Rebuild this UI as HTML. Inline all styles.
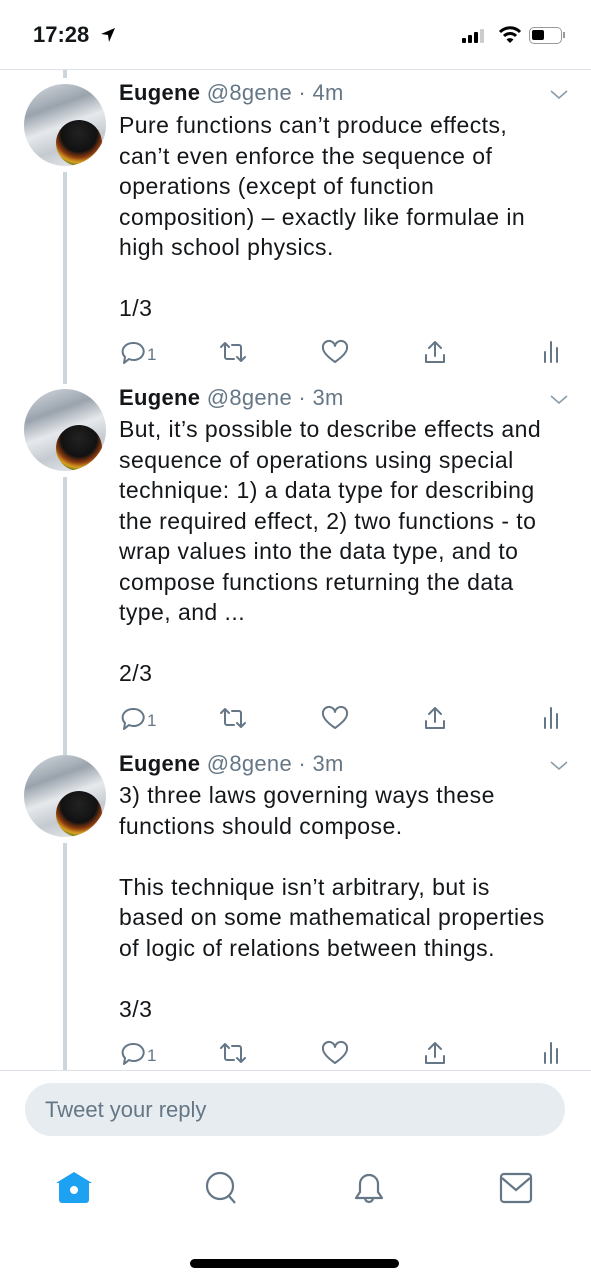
<!DOCTYPE html>
<html><head><meta charset="utf-8"><style>
*{margin:0;padding:0;box-sizing:border-box}
body{width:591px;height:1280px;background:#fff;position:relative;overflow:hidden;font-family:"Liberation Sans",Helvetica,Arial,sans-serif;color:#14171a}
.abs{position:absolute}
.line{position:absolute;left:63px;width:4px;background:#ccd6dd}
.av{position:absolute;left:24px;width:82px;height:82px;border-radius:50%;overflow:hidden;background:linear-gradient(160deg,#d8dde2 0%,#9aa3ad 30%,#e6e9ec 50%,#c4cad0 70%,#f0f2f4 100%)}
.av .h{position:absolute;left:32px;top:36px;width:46px;height:46px;border-radius:50%;background:radial-gradient(circle at 50% 30%,#222 0%,#111 45%,#8a3a10 60%,#d9a020 72%,#3b6e20 85%,#111 100%)}
.name{position:absolute;left:119px;font-size:22px;line-height:26px;white-space:nowrap;letter-spacing:0.3px}
.name b{font-weight:bold;color:#14171a}
.name span{color:#657786}
.chev{position:absolute;left:549px;width:20px;height:12px}
.txt{position:absolute;left:119px;font-size:23px;line-height:30.5px;letter-spacing:0.45px;width:470px;white-space:nowrap}
</style></head><body>
<div class="abs" style="left:33px;top:22px;font-size:22px;font-weight:bold">17:28</div>
<svg class="abs" style="left:100px;top:27px" width="16" height="16" viewBox="0 0 16 16"><path d="M15 1 L1 7 L8 8 L9 15 Z" fill="#000"/></svg>
<svg class="abs" style="left:462px;top:28px" width="30" height="16"><rect x="0" y="10" width="4" height="5" rx="1"/><rect x="6" y="7" width="4" height="8" rx="1"/><rect x="12" y="4" width="4" height="11" rx="1"/><rect x="18" y="1" width="4" height="14" rx="1" fill="#ccc"/></svg>
<svg class="abs" style="left:498px;top:26px" width="24" height="18" viewBox="0 0 24 18"><path d="M2 6 A14 14 0 0 1 22 6" stroke="#000" stroke-width="3" fill="none"/><path d="M6 10 A8.5 8.5 0 0 1 18 10" stroke="#000" stroke-width="3" fill="none"/><path d="M12 17 L8.5 13.5 A5 5 0 0 1 15.5 13.5 Z"/></svg>
<div class="abs" style="left:529px;top:27px;width:33px;height:17px;border:1.5px solid #999;border-radius:5px"><div style="position:absolute;left:2px;top:2px;width:12px;height:10px;background:#000;border-radius:2px"></div></div>
<div class="abs" style="left:563px;top:32px;width:2px;height:6px;background:#999"></div>
<div class="abs" style="left:0;top:69px;width:591px;height:1px;background:#dde3e8"></div>

<div class="line" style="top:70px;height:8px"></div>
<div class="line" style="top:172px;height:212px"></div>
<div class="line" style="top:477px;height:278px"></div>
<div class="line" style="top:843px;height:228px"></div>

<div class="av" style="top:84px"><div class="h"></div></div>
<div class="name" style="top:80px"><b>Eugene</b> <span>@8gene · 4m</span></div>
<svg class="chev" style="top:89px" viewBox="0 0 20 12"><path d="M2 2 L10 9 L18 2" stroke="#8899a6" stroke-width="1.5" fill="none"/></svg>
<div class="txt" style="top:110px">Pure functions can’t produce effects,<br>can’t even enforce the sequence of<br>operations (except of function<br>composition) – exactly like formulae in<br>high school physics.<br><br>1/3</div>

<div class="av" style="top:389px"><div class="h"></div></div>
<div class="name" style="top:385px"><b>Eugene</b> <span>@8gene · 3m</span></div>
<svg class="chev" style="top:394px" viewBox="0 0 20 12"><path d="M2 2 L10 9 L18 2" stroke="#8899a6" stroke-width="1.5" fill="none"/></svg>
<div class="txt" style="top:414px">But, it’s possible to describe effects and<br>sequence of operations using special<br>technique: 1) a data type for describing<br>the required effect, 2) two functions - to<br>wrap values into the data type, and to<br>compose functions returning the data<br>type, and ...<br><br>2/3</div>

<div class="av" style="top:755px"><div class="h"></div></div>
<div class="name" style="top:751px"><b>Eugene</b> <span>@8gene · 3m</span></div>
<svg class="chev" style="top:760px" viewBox="0 0 20 12"><path d="M2 2 L10 9 L18 2" stroke="#8899a6" stroke-width="1.5" fill="none"/></svg>
<div class="txt" style="top:780px">3) three laws governing ways these<br>functions should compose.<br><br>This technique isn’t arbitrary, but is<br>based on some mathematical properties<br>of logic of relations between things.<br><br>3/3</div>

<svg class="abs" style="left:0;top:338px" width="591" height="30"><g id="acts" stroke="#657786" stroke-width="2" fill="none" stroke-linecap="round" stroke-linejoin="round">
<path d="M133 5 a10 8.5 0 1 1 -4 16 l-5 4 l1 -6 a10 8.5 0 0 1 8 -14z"/>
<path d="M221 9 l4 -4 l4 4 M225 5 v14 a2 2 0 0 0 2 2 h7"/><path d="M245 19 l-4 4 l-4 -4 M241 23 v-14 a2 2 0 0 0 -2 -2 h-7"/>
<path d="M335 24 c-10 -7 -12 -11 -12 -14 a5.5 5.5 0 0 1 12 -2 a5.5 5.5 0 0 1 12 2 c0 3 -2 7 -12 14z"/>
<path d="M435 4 v14 M429 10 l6 -6 l6 6 M426 17 v7 h18 v-7"/>
<path d="M545 14 v10 M551 4 v20 M557 10 v14"/></g>
<text x="147" y="22" font-size="17" fill="#657786" font-family="Liberation Sans">1</text></svg>
<svg class="abs" style="left:0;top:704px" width="591" height="30"><use href="#acts"/><text x="147" y="22" font-size="17" fill="#657786" font-family="Liberation Sans">1</text></svg>
<svg class="abs" style="left:0;top:1039px" width="591" height="30"><use href="#acts"/><text x="147" y="22" font-size="17" fill="#657786" font-family="Liberation Sans">1</text></svg>

<div class="abs" style="left:0;top:1070px;width:591px;height:1px;background:#dde3e8"></div>
<div class="abs" style="left:25px;top:1083px;width:540px;height:53px;border-radius:27px;background:#e6ecf0;font-size:22px;color:#657786;padding:14px 0 0 20px">Tweet your reply</div>

<svg class="abs" style="left:56px;top:1170px" width="36" height="36" viewBox="0 0 36 36"><path d="M18 2 L36 13 L33 13 L33 30 a3 3 0 0 1 -3 3 H6 a3 3 0 0 1 -3 -3 V13 L0 13 Z" fill="#1da1f2"/><circle cx="18" cy="20" r="4" fill="#fff"/></svg>
<svg class="abs" style="left:204px;top:1170px" width="36" height="36" viewBox="0 0 36 36"><circle cx="16" cy="16" r="13" stroke="#657786" stroke-width="2.2" fill="none"/><path d="M25 26 L31 33" stroke="#657786" stroke-width="2.2"/></svg>
<svg class="abs" style="left:351px;top:1170px" width="36" height="36" viewBox="0 0 36 36"><path d="M5 28 h26 l-4 -6 v-8 a9 9 0 0 0 -18 0 v8 z M14 28 a4 4 0 0 0 8 0" stroke="#657786" stroke-width="2.2" fill="none" stroke-linejoin="round"/></svg>
<svg class="abs" style="left:499px;top:1172px" width="36" height="32" viewBox="0 0 36 32"><rect x="2" y="2" width="30" height="28" rx="3" stroke="#657786" stroke-width="2.2" fill="none"/><path d="M3 6 L17 18 L31 6" stroke="#657786" stroke-width="2.2" fill="none"/></svg>

<div class="abs" style="left:190px;top:1259px;width:209px;height:9px;border-radius:5px;background:#000"></div>
</body></html>
